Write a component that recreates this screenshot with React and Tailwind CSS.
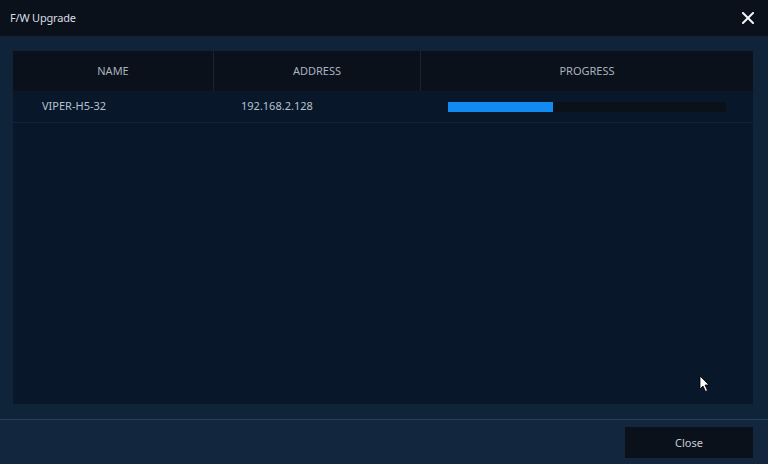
import React from "react";

export default function App() {
  return (
    <div
      className="w-[768px] h-[464px] flex flex-col bg-[#10243c] overflow-hidden relative"
      style={{ fontFamily: '"Noto Sans", "Open Sans", sans-serif' }}
    >
      {/* Title bar */}
      <div className="h-[36px] shrink-0 bg-[#0b111a] flex items-center justify-between pl-[10px] pr-[14px]">
        <span className="text-[11px] text-[#d8dde4] tracking-[-0.2px]">F/W Upgrade</span>
        <svg width="12" height="12" viewBox="0 0 12 12">
          <path d="M1 1 L11 11 M11 1 L1 11" stroke="#f2f4f7" strokeWidth="2" strokeLinecap="square" />
        </svg>
      </div>

      {/* Body */}
      <div className="h-[383px] shrink-0 bg-[#0f2339] pt-[15px] pl-[13px] pr-[15px] pb-[15px] flex">
        <div className="flex-1 bg-[#08172a] flex flex-col">
          {/* Header */}
          <div className="h-[40px] bg-[#0a111b] flex text-[11px] text-[#a9b3bf]">
            <div className="w-[201px] flex items-center justify-center border-r border-[#1a2330]">NAME</div>
            <div className="w-[207px] flex items-center justify-center border-r border-[#1a2330]">ADDRESS</div>
            <div className="flex-1 flex items-center justify-center">PROGRESS</div>
          </div>
          {/* Row */}
          <div className="h-[32px] flex items-center text-[11px] text-[#b8c1cc] border-b border-[#102339]">
            <div className="w-[201px] pl-[29px]">VIPER-H5-32</div>
            <div className="w-[207px] pl-[27px]">192.168.2.128</div>
            <div className="flex-1 pl-[27px] pr-[27px] flex items-center">
              <div className="w-full h-[10px] bg-[#0a111b] flex">
                <div className="w-[105px] h-full bg-[#118af2]" />
              </div>
            </div>
          </div>
        </div>
      </div>

      {/* Footer */}
      <div className="flex-1 border-t border-[#22405e] bg-[#12263e] flex justify-end items-start pt-[7px] pr-[15px]">
        <button className="w-[128px] h-[31px] pt-[2px] bg-[#0a111b] text-[11px] text-[#c6ccd4]">Close</button>
      </div>

      {/* Mouse cursor */}
      <svg className="absolute left-[699px] top-[375px]" width="12" height="18" viewBox="0 0 12 18">
        <path d="M1 1 L1 14 L4 11 L6.5 16.5 L8.5 15.5 L6 10 L10 10 Z" fill="#ffffff" stroke="#000000" strokeWidth="0.8" />
      </svg>
    </div>
  );
}
